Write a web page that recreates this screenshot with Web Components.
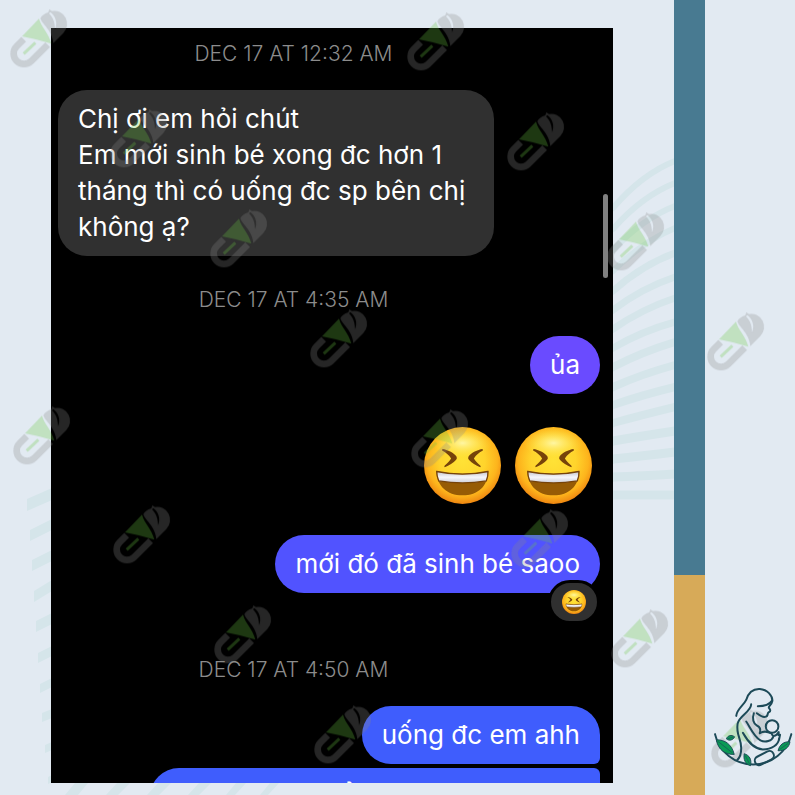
<!DOCTYPE html>
<html lang="vi">
<head>
<meta charset="utf-8">
<meta name="viewport" content="width=device-width, initial-scale=1">
<title>Feedback</title>
<style>
	html, body { height: 100%; }
	body {
		margin: 0;
		background: #e2eaf2;
		font-family: Inter, "Noto Sans", sans-serif;
	}
</style>
</head>
<body>

<feedback-page>
	<chat-window>
		<chat-stamp>Dec 17 at 12:32 AM</chat-stamp>
		<chat-bubble from="them">Chị ơi em hỏi chút<br>Em mới sinh bé xong đc hơn 1<br>tháng thì có uống đc sp bên chị<br>không ạ?</chat-bubble>
		<chat-stamp>Dec 17 at 4:35 AM</chat-stamp>
		<chat-bubble tone="violet">ủa</chat-bubble>
		<emoji-row>
			<laugh-emoji></laugh-emoji>
			<laugh-emoji></laugh-emoji>
		</emoji-row>
		<chat-bubble tone="indigo">mới đó đã sinh bé saoo<chat-reaction slot="reaction"></chat-reaction></chat-bubble>
		<chat-stamp class="late">Dec 17 at 4:50 AM</chat-stamp>
		<chat-bubble group="first">uống đc em ahh</chat-bubble>
		<chat-bubble group="next">ẩ</chat-bubble>
	</chat-window>
	<color-band slot="band"></color-band>
	<mother-logo slot="logo"></mother-logo>
</feedback-page>

<script>
// ================================= //
//              PAGE                 //
// ================================= //

class FeedbackPage extends HTMLElement {

	connectedCallback() {
		const SHADOW = this.attachShadow({mode: 'open'});
		SHADOW.innerHTML = `
		<style>
			:host {
				position: relative;
				display: grid;
				grid-template-columns: minmax(0, 1fr) 31px 90px;
				height: 100vh;
				overflow: hidden;
			}
			main {
				position: relative;
				display: flex;
				min-height: 0;
				padding: 28px 61px 12px 51px;
			}
			aside {
				position: relative;
				z-index: 2;
				display: flex;
				align-items: flex-end;
				justify-content: flex-end;
				padding: 0 1px 24px 0;
			}
			back-waves { position: absolute; inset: 0; }
			water-marks { position: absolute; inset: 0; z-index: 1; }
		</style>
		<back-waves></back-waves>
		<main><slot></slot></main>
		<slot name="band"></slot>
		<aside><slot name="logo"></slot></aside>
		<water-marks></water-marks>
		`;
	}
}

// ================================= //
//           BACKGROUND              //
// ================================= //

class BackWaves extends HTMLElement {

	connectedCallback() {
		const SHADOW = this.attachShadow({mode: 'open'});
		SHADOW.innerHTML = `
		<style>
			:host { display: block; }
			svg { display: block; width: 100%; height: 100%; }
		</style>
		<svg viewBox="0 0 795 795" preserveAspectRatio="xMaxYMin slice" aria-hidden="true">
			<g fill="none" stroke="#d5e5ea">${this.getRightWaves()}</g>
			<g fill="#d5e5ea">${this.getLeftWaves()}
				<path d="M75 783h13l-10 12h-13zM117 783h13l-12 12h-12zM158 783h13l-12 12h-12zM199 783h12l-12 12h-11zM236 783h10l-11 12h-9zM270 783h9l-11 12h-8z"/>
			</g>
		</svg>
		`;
	}
	getRightWaves() {
		// left end, right end of each line, from the top down
		let rows = [
			[208, 161], [229, 183], [250, 206], [271, 228], [291, 253], [310, 277], [329, 298], [348, 322],
			[367, 342], [387, 365], [405, 387], [423, 407], [441, 431], [459, 452], [477, 474], [495, 495]
		];
		return rows.map(([left, right], index) => {
			let bow = Math.round((left + right) / 2) - Math.max(0, 11 - index);
			let width = 6 + Math.floor(index / 4);
			return `<path stroke-width="${width}" d="M608 ${left + 3}L613 ${left}Q642 ${bow} 675 ${right}"/>`;
		}).join('');
	}
	getLeftWaves() {
		// x, top at x, top at the panel edge, thickness
		let rows = [
			[27, 499, 488, 12], [30, 530, 519, 11], [32, 560, 550, 11], [34, 591, 580, 11], [36, 621, 613, 11],
			[38, 653, 646, 10], [40, 684, 678, 9], [42, 713, 709, 9], [45, 745, 742, 8], [48, 777, 775, 7]
		];
		return rows.map(([x, top, edge, size]) =>
			`<path d="M${x} ${top}L52 ${edge}v${size}L${x} ${top + size}z"/>`
		).join('');
	}
}

class WaterMarks extends HTMLElement {

	connectedCallback() {
		const SHADOW = this.attachShadow({mode: 'open'});
		let marks = [
			[10, 9], [110, 109], [210, 209], [310, 309],
			[407, 12], [507, 112], [607, 212], [707, 312],
			[13, 406], [113, 505], [214, 605], [314, 705],
			[411, 409], [511, 509], [611, 609], [711, 709]
		];
		SHADOW.innerHTML = `
		<style>
			:host { display: block; pointer-events: none; }
			svg { display: block; width: 100%; height: 100%; }
		</style>
		<svg viewBox="0 0 795 795" preserveAspectRatio="xMinYMin slice" aria-hidden="true">
			<defs>
				<g id="capsule">
					<path fill="none" stroke="#888" stroke-width="20" d="M41 91L20 112A31 31 0 0 0 64 156L113 107"/>
					<path fill="none" stroke="#6bc843" stroke-width="9" d="M41 134L76 101"/>
					<path fill="#6bc843" d="M36 82L87 29C94 56 116 72 124 104Q80 90 36 82Z"/>
					<path fill="#888" fill-rule="evenodd" d="M91 28Q97 16 115 10L118 1L126 6A39 39 0 0 1 160 72L130 102C128 76 112 58 104 48Q94 38 91 28ZM121 9C136 20 144 40 135 61C135 42 130 26 117 13Z"/>
				</g>
			</defs>
			<g opacity="0.28">
				${marks.map(([x, y]) => `<use href="#capsule" transform="translate(${x} ${y}) scale(0.333)"/>`).join('')}
			</g>
		</svg>
		`;
	}
}

class ColorBand extends HTMLElement {

	connectedCallback() {
		const SHADOW = this.attachShadow({mode: 'open'});
		SHADOW.innerHTML = `
		<style>
			:host {
				position: relative;
				display: grid;
				grid-template-rows: 115fr 44fr;
			}
			.Teal { background: #487a91; }
			.Gold { background: #d7aa58; }
		</style>
		<div class="Teal"></div>
		<div class="Gold"></div>
		`;
	}
}

// ================================= //
//              CHAT                 //
// ================================= //

class ChatWindow extends HTMLElement {

	connectedCallback() {
		const SHADOW = this.attachShadow({mode: 'open'});
		SHADOW.innerHTML = `
		<style>
			:host {
				position: relative;
				display: flex;
				flex: 1;
				min-width: 0;
				overflow: hidden;
				background: #000;
				color: #fff;
			}
			section {
				display: flex;
				flex: 1;
				flex-direction: column;
				min-width: 0;
				padding: 13px 13px 0 7px;
			}
			.Scroll_Thumb {
				position: absolute;
				top: 166px;
				right: 5px;
				width: 5px;
				height: 84px;
				border-radius: 3px;
				background: #808080;
			}
		</style>
		<section aria-label="Chat"><slot></slot></section>
		<div class="Scroll_Thumb"></div>
		`;
	}
}

class ChatStamp extends HTMLElement {

	connectedCallback() {
		const SHADOW = this.attachShadow({mode: 'open'});
		SHADOW.innerHTML = `
		<style>
			:host {
				display: block;
				margin: 31px 71px 23px 0;
				color: #8c8c8c;
				font-size: 21px;
				font-weight: 300;
				line-height: 26px;
				text-align: center;
				text-transform: uppercase;
			}
			:host(:first-child) { margin-top: 0; }
			:host(.late) { margin-top: 64px; }
		</style>
		<time><slot></slot></time>
		`;
	}
}

class ChatBubble extends HTMLElement {

	connectedCallback() {
		const SHADOW = this.attachShadow({mode: 'open'});
		SHADOW.innerHTML = `
		<style>
			:host {
				position: relative;
				display: block;
				flex: none;
				align-self: flex-end;
				box-sizing: border-box;
				padding: 11px 20px;
				border-radius: 29px;
				background: #3f5dfd;
				font-size: 26px;
				line-height: 36px;
				white-space: nowrap;
			}
			:host([from="them"]) {
				align-self: flex-start;
				padding-right: 29px;
				background: #303030;
			}
			:host([tone="violet"]) { background: #6a4bff; }
			:host([tone="indigo"]) { background: #5153ff; }
			:host([group="first"]) { border-bottom-right-radius: 6px; }
			:host([group="next"]) {
				width: 83%;
				margin-top: 4px;
				border-top-right-radius: 6px;
				text-align: center;
				padding-right: 76px;
			}
			p { margin: 0; }
			::slotted(chat-reaction) { position: absolute; right: 0; bottom: -31px; }
		</style>
		<p><slot></slot></p>
		<slot name="reaction"></slot>
		`;
	}
}

class ChatReaction extends HTMLElement {

	connectedCallback() {
		const SHADOW = this.attachShadow({mode: 'open'});
		SHADOW.innerHTML = `
		<style>
			:host {
				display: flex;
				padding: 7px 11px;
				border: 3px solid #000;
				border-radius: 22px;
				background: #303030;
			}
			laugh-emoji { width: 24px; }
		</style>
		<laugh-emoji></laugh-emoji>
		`;
	}
}

class EmojiRow extends HTMLElement {

	connectedCallback() {
		const SHADOW = this.attachShadow({mode: 'open'});
		SHADOW.innerHTML = `
		<style>
			:host {
				display: flex;
				justify-content: flex-end;
				gap: 14px;
				margin: 33px 8px 31px 0;
			}
		</style>
		<slot></slot>
		`;
	}
}

class LaughEmoji extends HTMLElement {

	connectedCallback() {
		const SHADOW = this.attachShadow({mode: 'open'});
		SHADOW.innerHTML = `
		<style>
			:host { display: block; width: 77px; }
			svg { display: block; width: 100%; }
		</style>
		<svg viewBox="0 0 230 230" role="img" aria-label="😆">
			<defs>
				<radialGradient id="face" cx="0.5" cy="0.44" r="0.58">
					<stop offset="0" stop-color="#ffe236"/>
					<stop offset="0.5" stop-color="#ffd42c"/>
					<stop offset="0.78" stop-color="#fdb41c"/>
					<stop offset="1" stop-color="#ec7d0e"/>
				</radialGradient>
				<radialGradient id="shine">
					<stop offset="0" stop-color="#fffab0" stop-opacity="0.9"/>
					<stop offset="1" stop-color="#ffe94a" stop-opacity="0"/>
				</radialGradient>
				<linearGradient id="teeth" x2="0" y2="1">
					<stop offset="0" stop-color="#c4c4cc"/>
					<stop offset="0.5" stop-color="#f6f6fa"/>
					<stop offset="1" stop-color="#cfcfd8"/>
				</linearGradient>
			</defs>
			<circle cx="115" cy="115" r="115" fill="url(#face)"/>
			<ellipse cx="115" cy="48" rx="88" ry="44" fill="url(#shine)"/>
			<path fill="#76430a" d="M55 66C70 68 88 77 97 88Q100 93 96 98C88 107 75 115 62 120Q59 118 62 115C70 108 77 101 81 94C75 83 65 76 54 70ZM175 66C160 68 142 77 133 88Q130 93 134 98C142 107 155 115 168 120Q171 118 168 115C160 108 153 101 149 94C155 83 165 76 176 70Z"/>
			<path fill="#965b05" d="M37 132Q115 148 192 132C191 176 162 204 115 204S39 176 37 132Z"/>
			<path fill="url(#teeth)" stroke="#76430a" stroke-width="4" d="M38 133Q115 149 191 133Q192 147 186 161Q115 173 44 161Q38 147 38 133Z"/>
		</svg>
		`;
	}
}

// ================================= //
//              LOGO                 //
// ================================= //

class MotherLogo extends HTMLElement {

	connectedCallback() {
		const SHADOW = this.attachShadow({mode: 'open'});
		SHADOW.innerHTML = `
		<style>
			:host { display: block; width: 81px; }
			svg { display: block; width: 100%; }
		</style>
		<svg viewBox="40 34 244 252" role="img" aria-label="Mother and baby">
			<g fill="none" stroke="#1d4a58" stroke-width="6" stroke-linecap="round" stroke-linejoin="round">
				<path d="M46 176A118 118 0 0 0 276 176"/>
				<path d="M110 121C112 100 132 90 140 73C147 50 162 39 181 40C204 42 219 59 219 76C217 88 207 91 208 96C212 102 216 107 208 110C202 113 208 123 197 124C188 126 180 119 172 113"/>
				<path d="M175 92C192 92 210 87 218 75"/>
				<path d="M155 86C154 110 119 119 114 145C109 180 125 187 125 218C125 236 120 248 113 254"/>
				<path d="M163 113C157 130 162 145 172 150C183 155 184 164 181 173"/>
				<path d="M140 138C151 153 162 183 183 195C198 203 218 196 222 183"/>
				<path d="M130 172C143 195 160 220 190 222C218 222 237 207 239 190"/>
				<path d="M181 173C194 165 205 168 216 174C220 177 216 182 224 181C230 182 234 176 238 170L237 179L242 178L239 192"/>
				<circle cx="218" cy="153" r="19"/>
				<rect x="164" y="235" width="61" height="27" rx="13" transform="rotate(-27 194 248)"/>
			</g>
			<g fill="#0a9a55" stroke="#1d4a58" stroke-width="3">
				<path d="M50 193C76 193 96 206 104 237C76 238 56 224 50 193Z"/>
				<path d="M80 190C85 180 95 177 105 184C100 195 88 197 80 190Z"/>
				<path d="M236 226C240 208 253 198 272 199C269 216 257 227 236 226Z"/>
				<path d="M134 235C150 240 157 252 153 271C137 266 131 252 134 235Z"/>
			</g>
			<path fill="none" stroke="#1d4a58" stroke-width="2" d="M55 198L98 232M84 190L100 185M241 222L266 204M137 240L150 266"/>
		</svg>
		`;
	}
}

window.customElements.define('feedback-page', FeedbackPage);
window.customElements.define('back-waves', BackWaves);
window.customElements.define('water-marks', WaterMarks);
window.customElements.define('color-band', ColorBand);
window.customElements.define('chat-window', ChatWindow);
window.customElements.define('chat-stamp', ChatStamp);
window.customElements.define('chat-bubble', ChatBubble);
window.customElements.define('chat-reaction', ChatReaction);
window.customElements.define('emoji-row', EmojiRow);
window.customElements.define('laugh-emoji', LaughEmoji);
window.customElements.define('mother-logo', MotherLogo);
</script>
</body>
</html>
